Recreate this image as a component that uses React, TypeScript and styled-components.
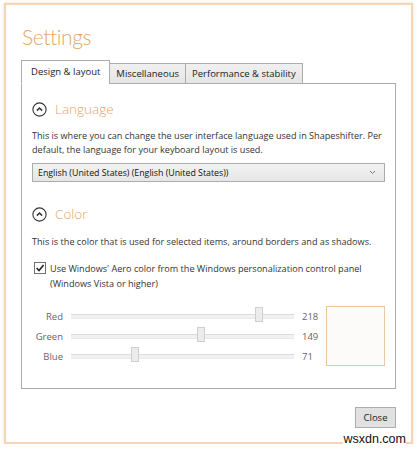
import React from 'react';
import styled, { createGlobalStyle } from 'styled-components';

const GlobalStyle = createGlobalStyle`
  body {
    margin: 0;
    background: #ffffff;
    font-family: "Open Sans", "Noto Sans", sans-serif;
    color: #333333;
  }
`;

const ACCENT = '#e6a56a';

const Window = styled.div`
  position: relative;
  box-sizing: border-box;
  width: 409px;
  height: 441px;
  margin: 3px 0 0 4px;
  padding: 17px 15px 0 15px;
  border: 2px solid #f4d6b6;
  box-shadow: 0 0 3px rgba(232, 170, 110, 0.4);
  background: #ffffff;
  display: flex;
  flex-direction: column;
`;

const Title = styled.h1`
  margin: 0 0 0 1px;
  font-family: Lato, "Open Sans", sans-serif;
  font-size: 21px;
  font-weight: 300;
  line-height: 30px;
  color: ${ACCENT};
  letter-spacing: -0.4px;
`;

const TabBar = styled.div`
  display: flex;
  align-items: flex-end;
  height: 24px;
  margin-top: 8px;
  position: relative;
  z-index: 1;
`;

const Tab = styled.div<{ $active?: boolean }>`
  box-sizing: border-box;
  height: ${p => (p.$active ? '24px' : '21px')};
  padding: 0 ${p => (p.$active ? '9px' : '6px')};
  margin-right: -1px;
  border: 1px solid #acacac;
  border-bottom: ${p => (p.$active ? '1px solid #ffffff' : '1px solid #acacac')};
  background: ${p => (p.$active ? '#ffffff' : 'linear-gradient(#f0f0f0, #e5e5e5)')};
  font-size: 9.5px;
  line-height: ${p => (p.$active ? '21px' : '19px')};
  color: #222222;
  white-space: nowrap;
`;

const Panel = styled.div`
  box-sizing: border-box;
  height: 306px;
  margin-top: -1px;
  padding: 15px 10px 0 10px;
  border: 1px solid #acacac;
  display: flex;
  flex-direction: column;
`;

const SectionHead = styled.div<{ $gap?: number }>`
  display: flex;
  align-items: center;
  gap: 8px;
  height: 20px;
  margin-top: ${p => p.$gap ?? 0}px;
  font-size: 13.5px;
  font-weight: 300;
  color: ${ACCENT};
`;

const Text = styled.p<{ $gap: number }>`
  margin: ${p => p.$gap}px 0 0 0;
  font-size: 9.1px;
  line-height: 14px;
  color: #333333;
`;

const Select = styled.div`
  box-sizing: border-box;
  height: 19px;
  margin-top: 6px;
  padding: 0 8px 0 5px;
  border: 1px solid #acacac;
  background: linear-gradient(#f2f2f2, #e6e6e6);
  display: flex;
  align-items: center;
  justify-content: space-between;
  font-size: 8.8px;
  color: #111111;
`;

const CheckRow = styled.label`
  display: flex;
  align-items: flex-start;
  gap: 4px;
  margin: 12px 0 0 2px;
  font-size: 9.1px;
  line-height: 15px;
  color: #333333;
`;

const Box = styled.span`
  box-sizing: border-box;
  flex: none;
  width: 12px;
  height: 12px;
  margin-top: 1px;
  border: 1px solid #707070;
  background: #ffffff;
  display: flex;
  align-items: center;
  justify-content: center;
`;

const ColorArea = styled.div`
  display: flex;
  align-items: flex-start;
  margin-top: 15px;
`;

const Sliders = styled.div`
  display: grid;
  grid-template-columns: 31px 223px 22px;
  grid-auto-rows: 20px;
  column-gap: 8px;
  align-items: center;
`;

const SliderLabel = styled.span`
  font-size: 9.5px;
  color: #666666;
  text-align: right;
`;

const Track = styled.div`
  position: relative;
  height: 3px;
  border-top: 1px solid #dcdcdc;
  border-bottom: 1px solid #e9e9e9;
  background: #f1f1f1;
`;

const Thumb = styled.div`
  position: absolute;
  top: -8px;
  box-sizing: border-box;
  width: 8px;
  height: 15px;
  border: 1px solid #cfcfcf;
  background: #ececec;
`;

const SliderValue = styled.span`
  font-size: 9.5px;
  color: #666666;
`;

const Swatch = styled.div<{ $color: string }>`
  box-sizing: border-box;
  width: 61px;
  height: 60px;
  margin-left: 2px;
  border: 1px solid #eac7a0;
  background: ${p => p.$color};
`;

const Footer = styled.div`
  display: flex;
  justify-content: flex-end;
  margin-top: 18px;
`;

const Button = styled.button`
  box-sizing: border-box;
  width: 41px;
  height: 21px;
  padding: 0;
  border: 1px solid #adadad;
  background: #e1e1e1;
  font-family: inherit;
  font-size: 9.5px;
  color: #222222;
`;

const Watermark = styled.span`
  position: absolute;
  right: 5px;
  bottom: -4px;
  font-family: "Liberation Sans", Arial, sans-serif;
  font-size: 12.5px;
  color: #111111;
  background: #ffffff;
  line-height: 14px;
`;

const CollapseIcon = () => (
  <svg width="15" height="15" viewBox="0 0 15 15">
    <circle cx="7.5" cy="7.5" r="6.6" fill="none" stroke="#333" strokeWidth="1.1" />
    <path d="M4.9 8.6 L7.5 6 L10.1 8.6" fill="none" stroke="#333" strokeWidth="1.5" />
  </svg>
);

const channels = [
  { name: 'Red', value: 218 },
  { name: 'Green', value: 149 },
  { name: 'Blue', value: 71 },
];

export default function App() {
  return (
    <>
      <GlobalStyle />
      <Window>
        <Title>Settings</Title>
        <TabBar>
          <Tab $active>Design &amp; layout</Tab>
          <Tab>Miscellaneous</Tab>
          <Tab>Performance &amp; stability</Tab>
        </TabBar>
        <Panel>
          <SectionHead>
            <CollapseIcon />
            Language
          </SectionHead>
          <Text $gap={10}>
            This is where you can change the user interface language used in Shapeshifter. Per
            default, the language for your keyboard layout is used.
          </Text>
          <Select>
            <span>English (United States) (English (United States))</span>
            <svg width="7" height="5" viewBox="0 0 7 5">
              <path d="M1 1 L3.5 3.5 L6 1" fill="none" stroke="#777" strokeWidth="1" />
            </svg>
          </Select>

          <SectionHead $gap={22}>
            <CollapseIcon />
            Color
          </SectionHead>
          <Text $gap={11}>
            This is the color that is used for selected items, around borders and as shadows.
          </Text>
          <CheckRow>
            <Box>
              <svg width="10" height="10" viewBox="0 0 10 10">
                <path d="M1.6 5 L4 7.5 L8.6 2" fill="none" stroke="#222" strokeWidth="1.6" />
              </svg>
            </Box>
            <span>
              Use Windows' Aero color from the Windows personalization control panel
              <br />
              (Windows Vista or higher)
            </span>
          </CheckRow>
          <ColorArea>
            <Sliders>
              {channels.map(c => (
                <React.Fragment key={c.name}>
                  <SliderLabel>{c.name}</SliderLabel>
                  <Track>
                    <Thumb style={{ left: `${Math.round((c.value / 255) * 215)}px` }} />
                  </Track>
                  <SliderValue>{c.value}</SliderValue>
                </React.Fragment>
              ))}
            </Sliders>
            <Swatch $color="#fdfbf9" />
          </ColorArea>
        </Panel>
        <Footer>
          <Button>Close</Button>
        </Footer>
        <Watermark>wsxdn.com</Watermark>
      </Window>
    </>
  );
}
